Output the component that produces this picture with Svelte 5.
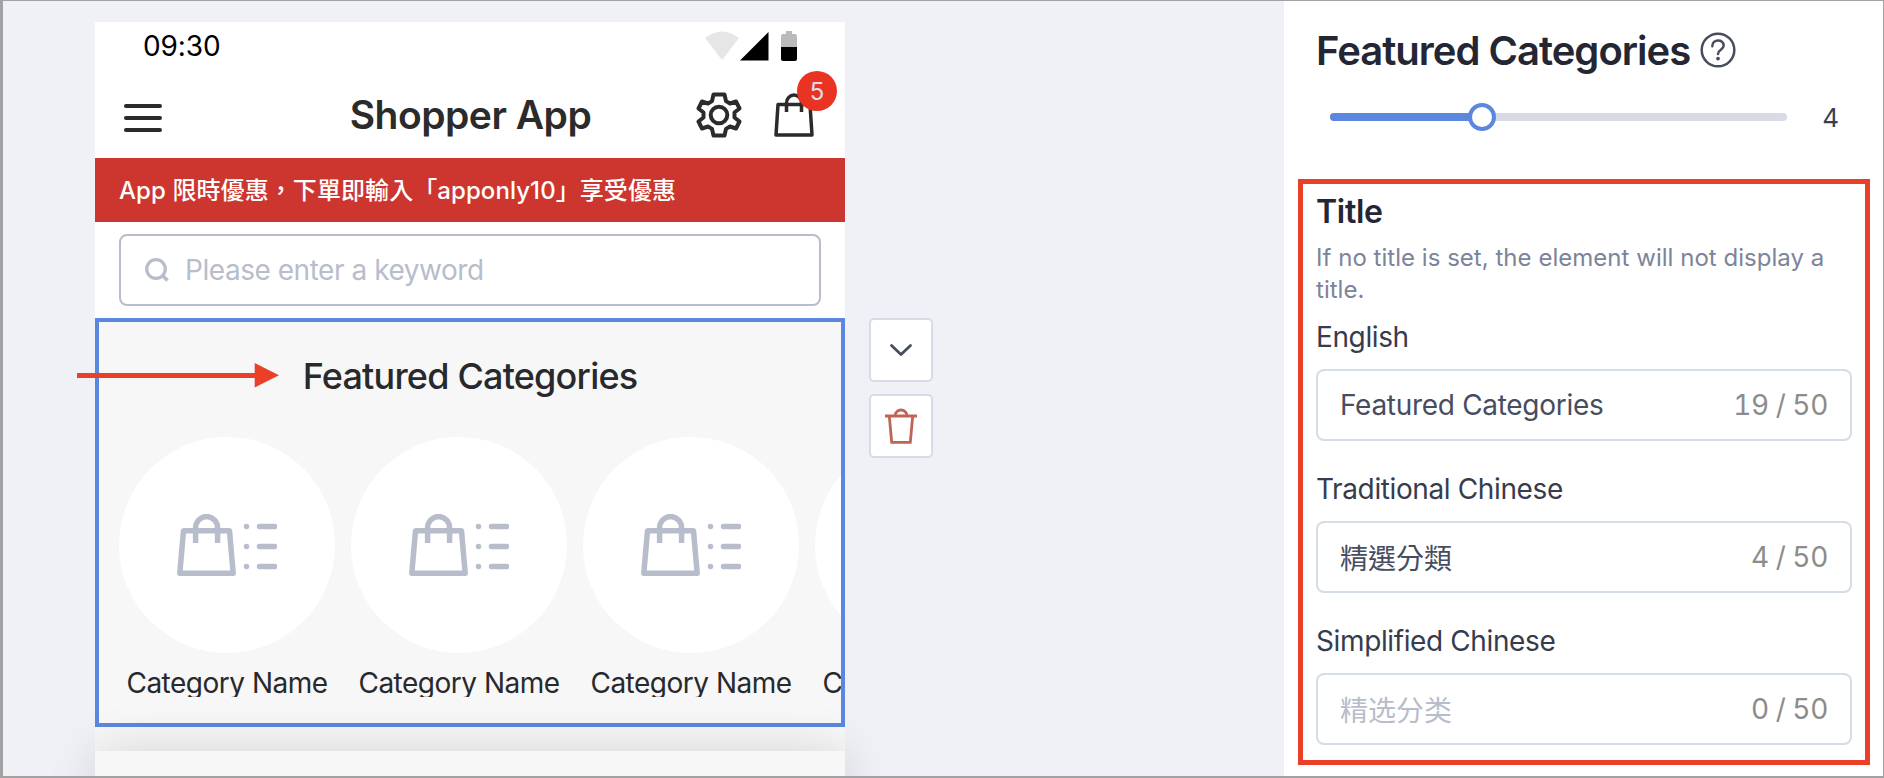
<script>
    let titulo = "Featured Categories";
    let cantidad = 4;
    let minimo = 1;
    let maximo = 10;
    let limite = 50;
    let categorias = [
        "Category Name",
        "Category Name",
        "Category Name",
        "Category Name",
    ];
    let campos = [
        { id: "en", label: "English", valor: "Featured Categories", ejemplo: "" },
        { id: "tc", label: "Traditional Chinese", valor: "精選分類", ejemplo: "" },
        { id: "sc", label: "Simplified Chinese", valor: "", ejemplo: "精选分类" },
    ];
    $: progreso = ((cantidad - minimo) / (maximo - minimo)) * 100;
</script>

<div class="editor">
    <main class="canvas">
        <div class="phone">
            <div class="statusbar">
                <span class="hora">09:30</span>
                <svg width="94" height="32" viewBox="0 0 94 32">
                    <path d="M17 30 L0 8 Q17 -5 34 8 Z" fill="#e6e6e6" />
                    <path d="M35 30.500 L63.500 2 V30.500 Z" fill="#000" />
                    <path d="M81 1 h6 v3 h3 a2 2 0 0 1 2 2 v11 h-16 v-11 a2 2 0 0 1 2 -2 h3 z" fill="#bababa" />
                    <path d="M76 17 h16 v12 a2 2 0 0 1 -2 2 h-12 a2 2 0 0 1 -2 -2 z" fill="#000" />
                </svg>
            </div>
            <div class="navbar">
                <svg class="menu" width="38" height="28" viewBox="0 0 38 28">
                    <path d="M2 2 H36 M2 14 H36 M2 26 H36" stroke="#2b2b2b" stroke-width="4" stroke-linecap="round" />
                </svg>
                <h1>Shopper App</h1>
                <svg class="gear" width="46" height="46" viewBox="-23 -23 46 46" fill="none" stroke="#2b2b2b" stroke-width="4" stroke-linejoin="round">
                    <path d="M-5.500 -20.500 H5.500 L7 -13.900 L11 -11.500 L17 -13.500 L20.500 -6.500 L15.500 -2.500 V2.500 L20.500 6.500 L17 13.500 L11 11.500 L7 13.900 L5.500 20.500 H-5.500 L-7 13.900 L-11 11.500 L-17 13.500 L-20.500 6.500 L-15.500 2.500 V-2.500 L-20.500 -6.500 L-17 -13.500 L-11 -11.500 L-7 -13.900 Z" />
                    <circle r="8.300" />
                </svg>
                <div class="cart">
                    <svg width="40" height="44" viewBox="0 0 40 44" fill="none" stroke="#2b2b2b" stroke-width="3.500" stroke-linejoin="round">
                        <path d="M4 11.500 H36 L38 42 H2 Z" />
                        <path d="M12.500 19 V10 a7.500 8 0 0 1 15 0 V19" />
                    </svg>
                    <span class="badge">5</span>
                </div>
            </div>
            <div class="promo">App 限時優惠，下單即輸入「apponly10」享受優惠</div>
            <div class="search">
                <div class="search-box">
                    <svg width="24" height="24" viewBox="0 0 24 24" fill="none" stroke="#b7bdcb" stroke-width="3.200">
                        <circle cx="11" cy="11" r="9.300" />
                        <path d="M17 17 L22.500 22.500" stroke-width="3.600" />
                    </svg>
                    <span>Please enter a keyword</span>
                </div>
            </div>
            <section class="featured">
                <h2>{titulo}</h2>
                <div class="categorias">
                    {#each categorias as nombre}
                        <div class="categoria">
                            <div class="circulo">
                                <svg width="100" height="62" viewBox="0 0 100 62" fill="none" stroke="#b7bdcb" stroke-width="5.500" stroke-linejoin="round">
                                    <path d="M6.500 16.700 H52.500 L56.200 59.200 H2.800 Z" />
                                    <path d="M18.600 29 V14 a11 11.500 0 0 1 22 0 V29" />
                                    <path d="M69.500 12.500 h.01 M82.500 12.500 H97.500 M69.500 32.500 h.01 M82.500 32.500 H97.500 M69.500 52.500 h.01 M82.500 52.500 H97.500" stroke-linecap="round" />
                                </svg>
                            </div>
                            <div class="nombre">{nombre}</div>
                        </div>
                    {/each}
                </div>
            </section>
            <section class="siguiente"></section>
        </div>
        <div class="acciones">
            <button aria-label="Move down">
                <svg width="60" height="60" viewBox="0 0 60 60" fill="none" stroke="#474d60" stroke-width="2.800" stroke-linecap="round" stroke-linejoin="round">
                    <path d="M20.500 25.500 L30 34.500 L39.500 25.500" />
                </svg>
            </button>
            <button aria-label="Delete">
                <svg width="60" height="60" viewBox="0 0 60 60" fill="none" stroke="#bf6553" stroke-width="2.800">
                    <path d="M14 20 H46 M18.300 20 L20.700 46.300 H39.300 L41.700 20 M24 20 a6 6 0 0 1 12 0" />
                </svg>
            </button>
        </div>
        <svg class="flecha" width="202" height="26" viewBox="0 0 202 26">
            <path d="M0 13.500 H180" stroke="#ea4027" stroke-width="5" />
            <path d="M177.700 1 L202 13.200 L177.700 25.500 Z" fill="#ea4027" />
        </svg>
    </main>

    <aside class="panel">
        <div class="panel-head">
            <h3>{titulo}</h3>
            <svg width="36" height="36" viewBox="0 0 36 36" fill="none" stroke="#474d60" stroke-width="2.500" stroke-linecap="round">
                <circle cx="18" cy="18" r="16.300" />
                <path d="M12.300 14.200 C12.300 6.800 23.700 6.800 23.700 13.500 C23.700 18 18 17.500 18 22" />
                <circle cx="18" cy="26.600" r="1.900" fill="#474d60" stroke="none" />
            </svg>
        </div>
        <div class="slider">
            <div class="track">
                <div class="fill" style="width: {progreso}%"></div>
                <div class="thumb" style="left: {progreso}%"></div>
            </div>
            <span>{cantidad}</span>
        </div>
        <div class="titulos">
            <h4>Title</h4>
            <p class="ayuda">If no title is set, the element will not display a title.</p>
            {#each campos as campo}
                <div class="campo">
                    <div class="label">{campo.label}</div>
                    <div class="input {campo.id}">
                        {#if campo.valor}
                            <span class="valor">{campo.valor}</span>
                        {:else}
                            <span class="ejemplo">{campo.ejemplo}</span>
                        {/if}
                        <span class="contador">{campo.valor.length} / {limite}</span>
                    </div>
                </div>
            {/each}
        </div>
    </aside>
</div>

<style>
    :global(body) {
        margin: 0;
        font-family: Inter, "Noto Sans CJK TC", sans-serif;
    }
    .editor,
    .editor * {
        box-sizing: border-box;
    }
    .editor {
        display: flex;
        width: 1884px;
        height: 778px;
        overflow: hidden;
        border: solid #a2a2a4;
        border-width: 1px 1px 2px 3px;
        background: #f0f1f6;
    }
    h1,
    h2,
    h3,
    h4,
    p {
        margin: 0;
    }
    svg {
        display: block;
        flex: none;
    }
    .canvas {
        position: relative;
        display: flex;
        flex: 1;
        gap: 24px;
        padding: 21px 0 0 92px;
    }

    /* phone */
    .phone {
        width: 750px;
        height: 800px;
        flex: none;
        background: #fff;
    }
    .statusbar {
        display: flex;
        justify-content: space-between;
        height: 58px;
        padding: 8px 46px 0 48px;
    }
    .hora {
        font-size: 28px;
        line-height: 33px;
        color: #000;
        letter-spacing: -0.1px;
    }
    .navbar {
        display: flex;
        align-items: flex-start;
        height: 78px;
        padding: 12px 31px 0 29px;
    }
    .menu {
        margin-top: 12px;
    }
    h1 {
        flex: 1;
        padding-left: 83px;
        font-size: 39px;
        line-height: 46px;
        font-weight: 600;
        letter-spacing: -0.5px;
        text-align: center;
        white-space: nowrap;
        color: #2b2b2b;
    }
    .gear {
        margin-right: 32px;
    }
    .cart {
        position: relative;
        padding-top: 1px;
    }
    .badge {
        position: absolute;
        top: -21px;
        left: 23px;
        width: 40px;
        height: 40px;
        border-radius: 50%;
        background: #ea3323;
        color: #dcdde8;
        font-size: 24px;
        line-height: 41px;
        text-align: center;
    }
    .promo {
        height: 64px;
        padding-left: 24px;
        background: #cd362e;
        color: #fff;
        font-size: 24px;
        font-weight: 500;
        line-height: 66px;
        letter-spacing: 0.08px;
        white-space: nowrap;
    }
    .search {
        height: 96px;
        padding: 12px 24px;
    }
    .search-box {
        display: flex;
        align-items: center;
        height: 72px;
        padding-left: 24px;
        gap: 16px;
        border: 2px solid #b7bdcb;
        border-radius: 8px;
        color: #b7bdcb;
        font-size: 28px;
        letter-spacing: -0.46px;
    }
    .featured {
        height: 409px;
        padding: 30px 0 0 20px;
        border: 4px solid #5b87de;
        background: #f7f7f7;
        overflow: hidden;
    }
    h2 {
        padding-right: 20px;
        font-size: 36px;
        line-height: 48px;
        font-weight: 500;
        letter-spacing: -0.8px;
        text-align: center;
        color: #28292c;
    }
    .categorias {
        display: flex;
        gap: 16px;
        padding-top: 37px;
    }
    .categoria {
        flex: none;
        width: 216px;
    }
    .circulo {
        display: flex;
        align-items: center;
        justify-content: center;
        height: 216px;
        border-radius: 50%;
        background: #fff;
    }
    .nombre {
        height: 28px;
        margin-top: 16px;
        overflow: hidden;
        font-size: 28px;
        line-height: 28px;
        letter-spacing: -0.5px;
        text-align: center;
        white-space: nowrap;
        color: #28292c;
    }
    .siguiente {
        height: 60px;
        margin-top: 24px;
        background: #f7f7f7;
        box-shadow: 0 0 50px rgba(0, 0, 0, 0.14), 0 -24px 0 #f7f7f7;
    }

    .acciones {
        display: flex;
        flex-direction: column;
        gap: 12px;
        padding-top: 296px;
    }
    .acciones button {
        width: 64px;
        height: 64px;
        padding: 0;
        border: 2px solid #d8dae6;
        border-radius: 5px;
        background: #fff;
    }
    .flecha {
        position: absolute;
        top: 361px;
        left: 74px;
    }

    /* settings panel */
    .panel {
        width: 599px;
        padding: 24px 13px 0 14px;
        background: #fff;
    }
    .panel-head {
        display: flex;
        align-items: center;
        gap: 10px;
        height: 50px;
        padding-left: 18px;
    }
    h3 {
        padding-top: 2px;
        font-size: 40px;
        line-height: 50px;
        font-weight: 600;
        letter-spacing: -1px;
        white-space: nowrap;
        color: #242633;
    }
    .slider {
        display: flex;
        align-items: center;
        justify-content: space-between;
        height: 84px;
        padding: 0 31px 0 32px;
    }
    .track {
        position: relative;
        width: 457px;
        height: 8px;
        border-radius: 4px;
        background: #d8dae6;
    }
    .fill {
        height: 8px;
        border-radius: 4px;
        background: #5b87de;
    }
    .thumb {
        position: absolute;
        top: -10px;
        width: 28px;
        height: 28px;
        margin-left: -14px;
        border: 4px solid #5b87de;
        border-radius: 50%;
        background: #fff;
    }
    .slider span {
        font-size: 26px;
        color: #3a3f50;
    }
    .titulos {
        height: 586px;
        margin-top: 20px;
        padding: 8px 13px 0;
        border: 5px solid #ea4027;
    }
    h4 {
        font-size: 32px;
        line-height: 40px;
        font-weight: 600;
        letter-spacing: -0.3px;
        color: #242633;
    }
    .ayuda {
        margin-top: 10px;
        font-size: 24px;
        line-height: 32px;
        letter-spacing: 0.03px;
        color: #7b849a;
    }
    .campo {
        height: 152px;
    }
    .label {
        padding-top: 11px;
        height: 63px;
        font-size: 28px;
        line-height: 40px;
        letter-spacing: -0.38px;
        color: #363c4d;
    }
    .input {
        display: flex;
        align-items: center;
        justify-content: space-between;
        height: 72px;
        padding: 0 22px;
        border: 2px solid #d5dde6;
        border-radius: 8px;
        font-size: 28px;
        letter-spacing: -0.3px;
        color: #474d5e;
    }
    .tc,
    .sc {
        letter-spacing: 0;
    }
    .sc {
        font-family: Inter, "Noto Sans CJK SC", sans-serif;
    }
    .ejemplo {
        color: #b7bdcb;
    }
    .contador {
        color: #8c8c8c;
        letter-spacing: -0.3px;
        word-spacing: -0.4px;
        font-variant-numeric: tabular-nums;
    }
</style>
